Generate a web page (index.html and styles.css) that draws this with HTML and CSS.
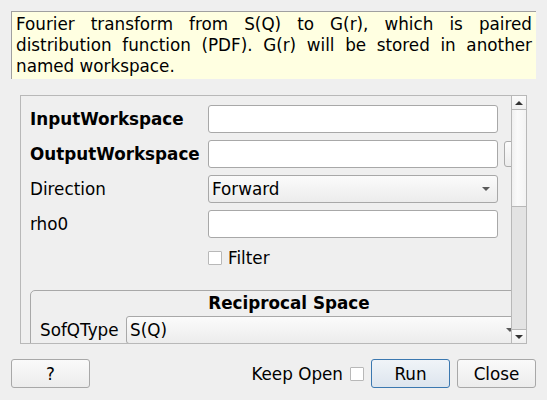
FILE: index.html
```html
<!DOCTYPE html>
<html>
<head>
<meta charset="utf-8">
<link rel="stylesheet" href="styles.css">
</head>
<body>
<div class="dialog">
  <div class="desc">Fourier transform from S(Q) to G(r), which is paired distribution function (PDF). G(r) will be stored in another named workspace.</div>

  <div class="scroll">
    <div class="viewport">
      <div class="form">
        <div class="label bold">InputWorkspace</div>
        <div class="input"></div>
        <div></div>

        <div class="label bold">OutputWorkspace</div>
        <div class="input"></div>
        <div class="minibtn"></div>

        <div class="label">Direction</div>
        <div class="combo"><span>Forward</span><i class="arrow"></i></div>
        <div></div>

        <div class="label">rho0</div>
        <div class="input"></div>
        <div></div>

        <div></div>
        <label class="check"><span class="box"></span><span>Filter</span></label>
        <div></div>

        <div class="group">
          <div class="group-title">Reciprocal Space</div>
          <div class="group-row">
            <div class="glabel">SofQType</div>
            <div class="combo wide"><span>S(Q)</span><i class="arrow"></i></div>
          </div>
        </div>
      </div>
    </div>
    <div class="vbar">
      <div class="sbtn"><i class="up"></i></div>
      <div class="handle"></div>
      <div class="track"></div>
      <div class="sbtn down-btn"><i class="down"></i></div>
    </div>
  </div>

  <div class="footer">
    <button class="btn">?</button>
    <div class="spacer"></div>
    <span class="keep">Keep Open</span>
    <span class="box keepbox"></span>
    <button class="btn run">Run</button>
    <button class="btn">Close</button>
  </div>
</div>
</body>
</html>
```

FILE: styles.css
```css
html, body {
  margin: 0;
  padding: 0;
  background: #efefef;
}
body {
  font-family: "DejaVu Sans", sans-serif;
  font-size: 16.8px;
  color: #000;
}
.dialog {
  width: 547px;
  height: 400px;
  box-sizing: border-box;
  padding: 11px 11px 0 11px;
  display: flex;
  flex-direction: column;
  overflow: hidden;
}
.desc {
  background: #ffffe1;
  border-top: 1px solid #a0a0a0;
  border-left: 1px solid #a0a0a0;
  padding: 2px 4px 0 4px;
  width: 525px;
  box-sizing: border-box;
  height: 68px;
  line-height: 21px;
  text-align: justify;
}
.scroll {
  margin: 16px 0 0 9px;
  width: 507px;
  height: 249px;
  box-sizing: border-box;
  border: 1px solid #b8b8b8;
  display: flex;
}
.viewport {
  flex: 1;
  overflow: hidden;
  position: relative;
}
.form {
  width: 540px;
  padding: 9px 0 0 9px;
  display: grid;
  grid-template-columns: 172px 290px 32px;
  column-gap: 6px;
  row-gap: 7px;
  grid-auto-rows: 28px;
}
.label {
  display: flex;
  align-items: center;
  white-space: nowrap;
}
.bold { font-weight: bold; }
.input {
  background: #fff;
  border: 1px solid #a8a8a8;
  border-radius: 3px;
}
.minibtn {
  margin: 1px 0;
  border: 1px solid #ababab;
  border-radius: 3px;
  background: linear-gradient(#fcfcfc, #ececec);
}
.combo {
  border: 1px solid #a8a8a8;
  border-radius: 3px;
  background: linear-gradient(#fbfbfb, #ececec);
  display: flex;
  align-items: center;
  padding-left: 3px;
  position: relative;
}
.combo span { flex: 1; }
.arrow {
  width: 0;
  height: 0;
  border-left: 4px solid transparent;
  border-right: 4px solid transparent;
  border-top: 4px solid #5a5a5a;
  margin-right: 7px;
}
.check {
  display: flex;
  align-items: center;
  gap: 6px;
  height: 26px;
  margin-top: 0;
}
.box {
  display: inline-block;
  width: 12px;
  height: 12px;
  background: #fff;
  border: 1px solid #b8b8b8;
  border-radius: 1px;
}
.group {
  grid-column: 1 / -1;
  margin-top: 10px;
  margin-right: -3px;
  height: 80px;
  border: 1px solid #a8a8a8;
  border-radius: 5px;
  box-sizing: border-box;
  padding: 0 0 0 9px;
}
.group-title {
  font-weight: bold;
  text-align: center;
  height: 25px;
  line-height: 24px;
}
.group-row {
  display: flex;
  gap: 5px;
  height: 28px;
}
.glabel {
  display: flex;
  align-items: center;
  width: 81px;
}
.combo.wide {
  width: 396px;
  flex: none;
  box-sizing: border-box;
}
.vbar {
  width: 14px;
  border-left: 1px solid #b8b8b8;
  display: flex;
  flex-direction: column;
  background: #e3e3e3;
}
.sbtn {
  height: 13px;
  background: linear-gradient(#fbfbfb, #efefef);
  display: flex;
  align-items: center;
  justify-content: center;
  border-bottom: 1px solid #b8b8b8;
  flex: none;
}
.down-btn {
  border-bottom: none;
  border-top: 1px solid #b8b8b8;
}
.up, .down {
  width: 0;
  height: 0;
  border-left: 4px solid transparent;
  border-right: 4px solid transparent;
}
.up { border-bottom: 4px solid #333; }
.down { border-top: 4px solid #333; }
.handle {
  height: 96px;
  flex: none;
  background: linear-gradient(90deg, #f0f0f0, #fafafa 40%, #f3f3f3);
  border-bottom: 1px solid #b8b8b8;
}
.track { flex: 1; }
.footer {
  margin-top: 15px;
  display: flex;
  align-items: center;
  height: 29px;
}
.spacer { flex: 1; }
.btn {
  width: 79px;
  height: 29px;
  font-family: "DejaVu Sans", sans-serif;
  font-size: 16.8px;
  color: #000;
  border: 1px solid #a8a8a8;
  border-radius: 3px;
  background: linear-gradient(#fafafa, #ececec);
  padding: 0;
}
.keep { margin-right: 7px; }
.keepbox { margin-right: 7px; }
.run {
  border-color: #3b78b0;
  background: linear-gradient(#f0f4f8, #dde5ee);
  margin-right: 7px;
}
```
